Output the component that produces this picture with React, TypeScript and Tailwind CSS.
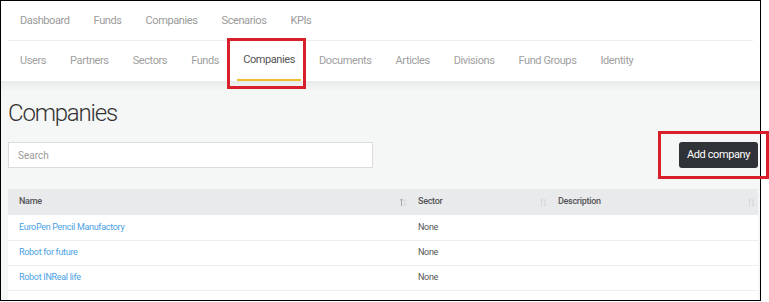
const topNav = ["Dashboard", "Funds", "Companies", "Scenarios", "KPIs"];
const subNav = ["Users", "Partners", "Sectors", "Funds", "Companies", "Documents", "Articles", "Divisions", "Fund Groups", "Identity"];

const rows = [
  { name: "EuroPen Pencil Manufactory", sector: "None" },
  { name: "Robot for future", sector: "None" },
  { name: "Robot INReal life", sector: "None" },
];

const SortIcon = ({ active }: { active?: boolean }) => (
  <svg width="7" height="9" viewBox="0 0 7 9" className="shrink-0">
    <path d="M1.5 8V1M0 2.5L1.5 1L3 2.5" stroke={active ? "#9aa0a6" : "#d3d6da"} strokeWidth="0.9" fill="none" />
    <path d="M5 1V8M3.5 6.5L5 8L6.5 6.5" stroke="#d3d6da" strokeWidth="0.9" fill="none" />
  </svg>
);

const App = () => {
  return (
    <div className="w-[769px] h-[302px] bg-white relative" style={{ fontFamily: "Roboto, 'Noto Sans', sans-serif" }}>
      <div className="w-[761px] h-[301px] border border-black overflow-hidden bg-[#f5f6f6] flex flex-col">
        <header className="bg-white shrink-0">
          <nav className="h-[39px] flex items-center gap-[24px] pl-[19px] pt-[1px] text-[11px] tracking-[-0.4px] text-[#9a9a9a]">
            {topNav.map((item) => (
              <span key={item}>{item}</span>
            ))}
          </nav>
          <div className="mx-[7px] h-px bg-[#eeeeee]" />
          <nav className="h-[40px] flex items-stretch gap-[24px] pl-[19px] text-[11px] tracking-[-0.4px] text-[#a0a0a0]">
            {subNav.map((item) => (
              <span
                key={item + (item === "Companies" ? "-active" : "")}
                className={
                  item === "Companies"
                    ? "relative flex items-center text-[#555] px-[6px] -mx-[6px] border-b-2 border-[#f0bd2c]"
                    : "flex items-center"
                }
              >
                {item}
              </span>
            ))}
          </nav>
        </header>

        <main className="flex-1 pl-[7px] pr-[2px] pt-[4px] bg-gradient-to-b from-[#e9ebeb] to-[#f5f6f6] bg-[length:100%_10px] bg-no-repeat">
          <h1 className="text-[24px] font-light tracking-[-1.2px] text-[#333] leading-none mt-[16px]">Companies</h1>

          <div className="flex items-center justify-between mt-[17px]">
            <div className="w-[365px] h-[26px] bg-white border border-[#dcdcdc] flex items-center px-[9px] text-[10px] text-[#999]">
              Search
            </div>
            <button className="h-[26px] px-[8px] rounded-[3px] bg-[#2f3237] text-white text-[11px] tracking-[-0.4px]">Add company</button>
          </div>

          <table className="w-full mt-[21px] text-[9px] tracking-[-0.3px] border-collapse">
            <thead>
              <tr className="bg-[#e8eaec] text-[#555]">
                <th className="h-[26px] text-left font-medium pl-[11px]">
                  <div className="flex items-center justify-between pr-[4px]">
                    <span>Name</span>
                    <SortIcon active />
                  </div>
                </th>
                <th className="h-[26px] text-left font-medium w-[140px] pl-[7px]">
                  <div className="flex items-center justify-between pr-[4px]">
                    <span>Sector</span>
                    <SortIcon />
                  </div>
                </th>
                <th className="h-[26px] text-left font-medium w-[207px] pl-[7px]">
                  <div className="flex items-center justify-between pr-[3px]">
                    <span>Description</span>
                    <SortIcon />
                  </div>
                </th>
              </tr>
            </thead>
            <tbody className="bg-white">
              {rows.map((r, idx) => (
                <tr key={idx} className="border-b border-[#eeeeee]">
                  <td className="h-[25px] pl-[11px] text-[#4a9fe3]">{r.name}</td>
                  <td className="h-[25px] pl-[7px] text-[#555]">{r.sector}</td>
                  <td className="h-[25px]"></td>
                </tr>
              ))}
              <tr>
                <td className="h-[25px]"></td>
                <td className="h-[25px]"></td>
                <td className="h-[25px]"></td>
              </tr>
            </tbody>
          </table>
        </main>
      </div>

      <div className="absolute left-[227px] top-[38px] w-[79px] h-[51px] border-[3px] border-[#d7202a]" />
      <div className="absolute left-[658px] top-[131px] w-[111px] h-[48px] border-[3px] border-[#d7202a]" />
    </div>
  );
};

export default App;
